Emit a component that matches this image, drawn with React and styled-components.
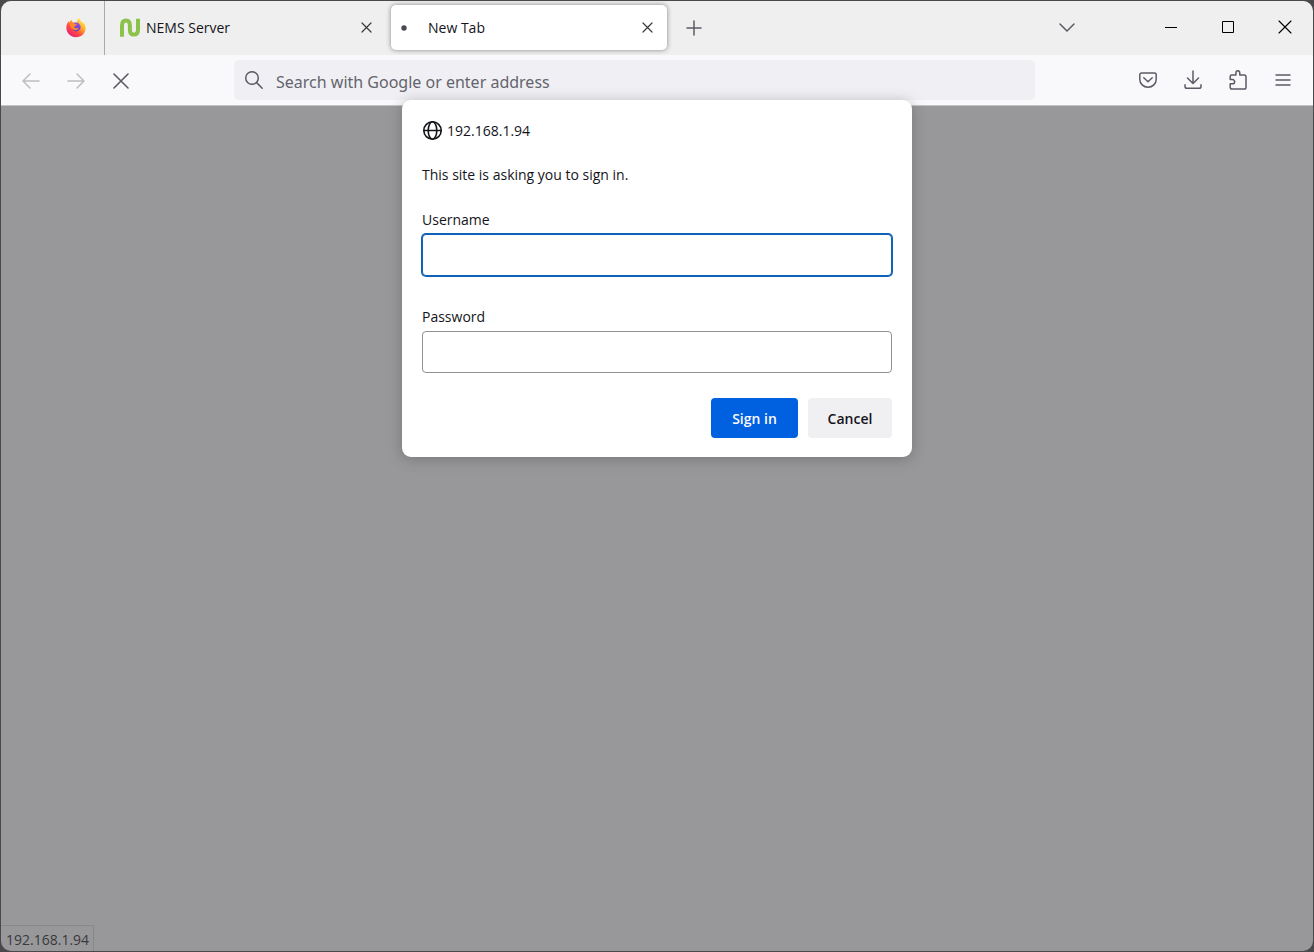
import styled, { createGlobalStyle } from 'styled-components'
import { useState } from 'react'

const GlobalStyle = createGlobalStyle`
    * {
        box-sizing: border-box;
    }

    body {
        margin: 0;
        background-color: #4a484b;
        font-family: 'Open Sans', 'Noto Sans', sans-serif;
    }

    button, input {
        font-family: inherit;
    }
`

const Desktop = styled.div`
    min-height: 100vh;
    padding: 1px;
    display: flex;
`

const Window = styled.div`
    position: relative;
    flex: 1;
    display: flex;
    flex-direction: column;
    overflow: hidden;
    border-radius: 10px;
    background-color: #98989a;
`

const TabStrip = styled.header`
    height: 54px;
    display: flex;
    align-items: stretch;
    background-color: #efefef;
`

const IconButton = styled.button`
    width: ${props => props.$width || 45}px;
    flex: none;
    padding: 0;
    border: 0;
    display: flex;
    align-items: center;
    justify-content: center;
    background: transparent;
    color: ${props => props.$color || '#5b5b66'};
`

const ViewButton = styled(IconButton)`
    width: 104px;
    padding-left: 46px;
    border-right: 1px solid #a9a9ae;
`

const Tab = styled.div`
    width: 276px;
    margin: 4px 5px 5px;
    padding: 0 6px 0 10px;
    display: flex;
    align-items: center;
    border-radius: 5px;
    background-color: ${props => props.$active ? '#ffffff' : 'transparent'};
    box-shadow: ${props => props.$active ? '0 0 5px rgba(0, 0, 0, 0.45)' : 'none'};
    color: #15141a;

    & + & {
        margin-left: 0;
    }
`

const TabIcon = styled.span`
    width: ${props => props.$width}px;
    flex: none;
    display: flex;
`

const TabTitle = styled.span`
    flex: 1;
    font-size: 14px;
    line-height: 20px;
`

const Captions = styled.div`
    margin-left: auto;
    padding-bottom: 2px;
    display: flex;
`

const Toolbar = styled.nav`
    height: 51px;
    padding: 0 8px 0 7px;
    display: flex;
    align-items: stretch;
    border-bottom: 1px solid #c4c4c8;
    background-color: #f9f9fb;
`

const HistoryButtons = styled.div`
    padding-top: 2px;
    display: flex;
`

const AddressBar = styled.label`
    flex: 1;
    margin: 5px 90px 5px 91px;
    padding: 0 10px;
    display: flex;
    align-items: center;
    gap: 12px;
    border-radius: 5px;
    background-color: #f0f0f4;
    color: #5b5b66;
`

const AddressInput = styled.input`
    flex: 1;
    min-width: 0;
    padding: 3px 0 0;
    border: 0;
    outline: 0;
    background: transparent;
    color: #15141a;
    font-family: 'Noto Sans', 'Open Sans', sans-serif;
    font-size: 16px;
    line-height: 24px;

    &::placeholder {
        color: #64646d;
        opacity: 1;
    }
`

const Page = styled.main`
    flex: 1;
    display: flex;
    align-items: flex-end;
`

const StatusPanel = styled.div`
    padding: 4px 4px 1px 5px;
    border: 1px solid #88888a;
    border-left: 0;
    border-bottom: 0;
    color: #39393c;
    font-size: 14px;
    line-height: 20px;
`

const Dialog = styled.form`
    position: absolute;
    top: 99px;
    left: 50%;
    transform: translateX(-50%);
    width: 510px;
    padding: 20px 20px 19px;
    border-radius: 9px;
    background-color: #ffffff;
    box-shadow: 0 2px 14px rgba(58, 57, 68, 0.35);
    color: #15141a;
`

const Site = styled.h1`
    margin: 0 0 24px;
    display: flex;
    align-items: center;
    gap: 4px;
    font-size: 14px;
    font-weight: 500;
    line-height: 20px;
`

const Message = styled.p`
    margin: 0 0 25px;
    font-size: 14px;
    line-height: 20px;
`

const Field = styled.label`
    display: block;
    margin-bottom: ${props => props.$last ? 25 : 31}px;
    font-size: 14px;
    line-height: 20px;
`

const TextBox = styled.input`
    display: block;
    width: 100%;
    height: 42px;
    margin-top: 4px;
    padding: 0 10px;
    border: 1px solid ${props => props.$active ? '#0f62b5' : '#929296'};
    border-radius: 4px;
    outline: 0;
    box-shadow: ${props => props.$active ? '0 0 0 1px #0f62b5' : 'none'};
    font-size: 14px;
`

const Actions = styled.div`
    display: flex;
    justify-content: flex-end;
    gap: 10px;
`

const Button = styled.button`
    height: 40px;
    width: ${props => props.$primary ? 87 : 84}px;
    padding: 0;
    border: 0;
    border-radius: 4px;
    background-color: ${props => props.$primary ? '#0061e0' : '#f0f0f2'};
    color: ${props => props.$primary ? '#fbfbfe' : '#15141a'};
    font-size: 14px;
    font-weight: 600;
`

function Icon({ size = 20, width = 1.5, children }) {
    return (
        <svg width={size} height={size} viewBox={`0 0 ${size} ${size}`} fill="none" stroke="currentColor"
            strokeWidth={width} strokeLinecap="round" strokeLinejoin="round" aria-hidden="true">
            {children}
        </svg>
    )
}

function FirefoxLogo() {
    return (
        <svg width="20" height="20" viewBox="0 0 20 20" aria-hidden="true">
            <defs>
                <linearGradient id="flame" x1="0.85" y1="0.1" x2="0.2" y2="0.95">
                    <stop offset="0" stopColor="#fff04a" />
                    <stop offset="0.35" stopColor="#ffa62b" />
                    <stop offset="0.65" stopColor="#ff4a3d" />
                    <stop offset="1" stopColor="#e8197d" />
                </linearGradient>
                <linearGradient id="globe" x1="0.6" y1="0" x2="0.4" y2="1">
                    <stop offset="0" stopColor="#9a4df0" />
                    <stop offset="1" stopColor="#5b3fc0" />
                </linearGradient>
            </defs>
            <path d="M12.4 0.2C14 1.3 14.8 2.6 15.1 3.8C16.2 4 17.3 5.1 17.6 6C17.7 5.4 17.6 4.8 17.4 4.4C18.9 6 19.6 8 19.6 9.9C19.6 15.2 15.3 19.2 10 19.2C4.7 19.2 0.4 15.1 0.4 9.8C0.4 7.1 1.3 4.8 2.8 3C2.8 3.6 2.9 4.2 3.1 4.6C3.8 3.4 4.8 2.4 5.8 1.8C5.7 2.9 6.1 3.9 6.8 4.5C8.2 4.1 9.8 4.2 11.1 4.9C11 3.3 11.3 1.6 12.4 0.2Z" fill="url(#flame)" />
            <circle cx="10.2" cy="9" r="4.4" fill="url(#globe)" />
            <path d="M3.3 5C5.4 3.8 7.6 4.4 8.8 6C9.6 6.1 10.5 6.2 10.8 6.5C10.6 7.6 9.2 7.7 8.5 8.5C8.1 9.2 8.7 10 9.6 10.2C10.7 10.4 11.6 9.6 12.7 10.1C12.3 11.8 10.4 12.7 8.4 12.1C6 11.4 4.4 9.4 4.3 7.5Z" fill="#ff8a2d" />
        </svg>
    )
}

function NemsLogo() {
    return (
        <svg width="20" height="20" viewBox="0 0 20 20" fill="none" stroke="#8bc34a" strokeWidth="4" aria-hidden="true">
            <path d="M2 18.8V7.4C2 4.2 3.5 2.4 6 2.4C8.5 2.4 9.9 4.2 9.9 7.4V11.8C9.9 14.9 11.4 16.6 13.9 16.6C16.5 16.6 18 14.9 18 11.8V0.8" />
        </svg>
    )
}

function CloseIcon({ size = 10, width = 1.2 }) {
    return (
        <Icon size={size} width={width}>
            <path d={`M1 1L${size - 1} ${size - 1}M${size - 1} 1L1 ${size - 1}`} />
        </Icon>
    )
}

function Tabs() {
    return (
        <TabStrip>
            <ViewButton aria-label="Firefox View"><FirefoxLogo /></ViewButton>
            <Tab>
                <TabIcon $width={26}><NemsLogo /></TabIcon>
                <TabTitle>NEMS Server</TabTitle>
                <IconButton $width={28} $color="#38383d" aria-label="Close NEMS Server"><CloseIcon size={11} /></IconButton>
            </Tab>
            <Tab $active>
                <TabIcon $width={27}>
                    <svg width="6" height="6" aria-hidden="true"><circle cx="3" cy="3" r="2.7" fill="#4a4a50" /></svg>
                </TabIcon>
                <TabTitle>New Tab</TabTitle>
                <IconButton $width={28} $color="#38383d" aria-label="Close New Tab"><CloseIcon size={11} /></IconButton>
            </Tab>
            <IconButton $width={44} aria-label="Open a new tab">
                <Icon size={16}><path d="M8 1V15M1 8H15" /></Icon>
            </IconButton>
            <Captions>
                <IconButton $width={46} aria-label="List all tabs">
                    <Icon size={16}><path d="M1 5L8 12L15 5" /></Icon>
                </IconButton>
            </Captions>
            <WindowControls />
        </TabStrip>
    )
}

const ControlGroup = styled.div`
    margin-left: 52px;
    padding-bottom: 2px;
    display: flex;
`

function WindowControls() {
    return (
        <ControlGroup>
            <IconButton $width={57} $color="#000" aria-label="Minimize">
                <svg width="12" height="13" stroke="currentColor"><path d="M0 6.5H12" /></svg>
            </IconButton>
            <IconButton $width={57} $color="#000" aria-label="Maximize">
                <svg width="12" height="12" fill="none" stroke="currentColor"><path d="M0.5 0.5H11.5V11.5H0.5Z" /></svg>
            </IconButton>
            <IconButton $width={57} $color="#000" aria-label="Close window"><CloseIcon size={14} width={1.1} /></IconButton>
        </ControlGroup>
    )
}

function Navigation() {
    return (
        <Toolbar>
            <HistoryButtons>
                <IconButton $color="#bdbdc2" aria-label="Back" disabled>
                    <Icon><path d="M18 10H2M9 3L2 10L9 17" /></Icon>
                </IconButton>
                <IconButton $color="#bdbdc2" aria-label="Forward" disabled>
                    <Icon><path d="M2 10H18M11 3L18 10L11 17" /></Icon>
                </IconButton>
                <IconButton aria-label="Stop"><CloseIcon size={16} width={1.6} /></IconButton>
            </HistoryButtons>
            <AddressBar>
                <Icon><circle cx="8" cy="8" r="6.3" /><path d="M12.6 12.6L18.2 18.2" /></Icon>
                <AddressInput aria-label="Address" placeholder="Search with Google or enter address" />
            </AddressBar>
            <IconButton aria-label="Save to Pocket">
                <Icon><path d="M3.5 3H16.5C17.5 3 18.2 3.7 18.2 4.6V9.2C18.2 13.7 14.6 17.2 10 17.2S1.8 13.7 1.8 9.2V4.6C1.8 3.7 2.5 3 3.5 3ZM5.8 7.8L10 11.8L14.2 7.8" /></Icon>
            </IconButton>
            <IconButton aria-label="Downloads">
                <Icon><path d="M10 1V13M4.5 8L10 13.5L15.5 8M2 14.8V16.2C2 17.6 2.8 18.3 4 18.3H16C17.2 18.3 18 17.6 18 16.2V14.8" /></Icon>
            </IconButton>
            <IconButton aria-label="Extensions">
                <Icon><path d="M3.8 5H7.9V3.2C7.9 0 11.8 0 11.8 3.2V5H16.2C17.3 5 18 5.7 18 6.8V17.2C18 18.3 17.3 19 16.2 19H4C2.9 19 2.2 18.3 2.2 17.2V13.8H4.4C7.4 13.8 7.4 9.6 4.4 9.6H2.2V6.6C2.2 5.7 2.9 5 3.8 5Z" /></Icon>
            </IconButton>
            <IconButton aria-label="Menu">
                <Icon size={16}><path d="M1 3H15M1 8H15M1 13H15" /></Icon>
            </IconButton>
        </Toolbar>
    )
}

function SignInDialog() {
    const [user, setUser] = useState('')
    const [password, setPassword] = useState('')

    return (
        <Dialog role="dialog" aria-labelledby="site" onSubmit={e => e.preventDefault()}>
            <Site id="site">
                <Icon size={21} width={1.6}>
                    <circle cx="10.5" cy="10.5" r="8.7" />
                    <ellipse cx="10.5" cy="10.5" rx="4.3" ry="8.7" />
                    <path d="M2 10.5H19" />
                </Icon>
                192.168.1.94
            </Site>
            <Message>This site is asking you to sign in.</Message>
            <Field>
                Username
                <TextBox $active type="text" value={user} onChange={e => setUser(e.target.value)} />
            </Field>
            <Field $last>
                Password
                <TextBox type="password" value={password} onChange={e => setPassword(e.target.value)} />
            </Field>
            <Actions>
                <Button $primary type="submit">Sign in</Button>
                <Button type="button">Cancel</Button>
            </Actions>
        </Dialog>
    )
}

function App() {
    return (
        <>
            <GlobalStyle />
            <Desktop>
                <Window>
                    <Tabs />
                    <Navigation />
                    <Page>
                        <StatusPanel>192.168.1.94</StatusPanel>
                    </Page>
                    <SignInDialog />
                </Window>
            </Desktop>
        </>
    )
}

export default App
